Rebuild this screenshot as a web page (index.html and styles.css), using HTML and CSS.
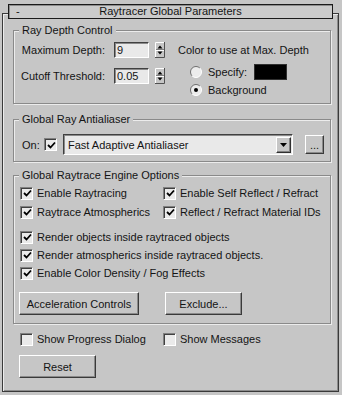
FILE: index.html
```html
<!DOCTYPE html>
<html lang="en">
<head>
  <meta charset="UTF-8">
  <title>Raytracer Global Parameters</title>
  <link rel="stylesheet" href="styles.css">
</head>
<body>

<div class="rollout">
  <div class="rollout-title">
    <span class="toggle">-</span>
    <span class="caption">Raytracer Global Parameters</span>
    <span></span>
  </div>

  <!-- Ray depth -->
  <fieldset class="group depth-group">
    <legend>Ray Depth Control</legend>
    <div class="depth-row">
      <div class="depth-fields">
        <div class="field">
          <label for="maxDepth">Maximum Depth:</label>
          <input class="edit" type="text" id="maxDepth" value="9">
          <svg class="spinner" width="10" height="16" viewBox="0 0 10 16">
            <path d="M0.5 15.5V0.5H9.5" fill="none" stroke="#fff"/>
            <path d="M9.5 0V15.5H0" fill="none" stroke="#505050"/>
            <path d="M1 7.5H9" stroke="#808080"/>
            <path d="M1 8.5H9" stroke="#fff"/>
            <path d="M5 3.5L7.5 6.5H2.5Z" fill="#000"/>
            <path d="M5 12.5L7.5 9.5H2.5Z" fill="#000"/>
          </svg>
        </div>
        <div class="field">
          <label for="cutoff">Cutoff Threshold:</label>
          <input class="edit" type="text" id="cutoff" value="0.05">
          <svg class="spinner" width="10" height="16" viewBox="0 0 10 16">
            <path d="M0.5 15.5V0.5H9.5" fill="none" stroke="#fff"/>
            <path d="M9.5 0V15.5H0" fill="none" stroke="#505050"/>
            <path d="M1 7.5H9" stroke="#808080"/>
            <path d="M1 8.5H9" stroke="#fff"/>
            <path d="M5 3.5L7.5 6.5H2.5Z" fill="#000"/>
            <path d="M5 12.5L7.5 9.5H2.5Z" fill="#000"/>
          </svg>
        </div>
      </div>
      <div class="depth-color">
        <div class="color-caption">Color to use at Max. Depth</div>
        <div class="radio-row specify">
          <svg class="radio" width="12" height="12" viewBox="0 0 12 12">
            <circle cx="6" cy="6" r="5.5" fill="#ececec"/>
            <path d="M9.9 2.1A5.5 5.5 0 0 0 2.1 9.9" fill="none" stroke="#707070"/>
            <path d="M2.1 9.9A5.5 5.5 0 0 0 9.9 2.1" fill="none" stroke="#fff"/>
          </svg>
          <span class="radio-label">Specify:</span>
          <span class="swatch"></span>
        </div>
        <div class="radio-row background">
          <svg class="radio" width="12" height="12" viewBox="0 0 12 12">
            <circle cx="6" cy="6" r="5.5" fill="#ececec"/>
            <path d="M9.9 2.1A5.5 5.5 0 0 0 2.1 9.9" fill="none" stroke="#707070"/>
            <path d="M2.1 9.9A5.5 5.5 0 0 0 9.9 2.1" fill="none" stroke="#fff"/>
            <circle cx="6" cy="6" r="2" fill="#000"/>
          </svg>
          <span class="radio-label">Background</span>
        </div>
      </div>
    </div>
  </fieldset>

  <!-- Antialiaser -->
  <fieldset class="group aa-group">
    <legend>Global Ray Antialiaser</legend>
    <div class="aa-row">
      <span class="aa-on">On:</span>
      <span class="check on">
        <svg width="9" height="9" viewBox="0 0 9 9"><path d="M1 4L3.5 6.5L8 1.5" fill="none" stroke="#000" stroke-width="1.8"/></svg>
      </span>
      <div class="dropdown">
        <span class="dropdown-text">Fast Adaptive Antialiaser</span>
        <span class="dropdown-arrow">
          <svg width="7" height="4" viewBox="0 0 7 4"><path d="M0 0H7L3.5 4Z" fill="#000"/></svg>
        </span>
      </div>
      <button type="button" class="btn dots">...</button>
    </div>
  </fieldset>

  <!-- Engine options -->
  <fieldset class="group engine-group">
    <legend>Global Raytrace Engine Options</legend>
    <div class="opt-grid">
      <div class="opt"><span class="check"><svg width="9" height="9" viewBox="0 0 9 9"><path d="M1 4L3.5 6.5L8 1.5" fill="none" stroke="#000" stroke-width="1.8"/></svg></span>Enable Raytracing</div>
      <div class="opt"><span class="check"><svg width="9" height="9" viewBox="0 0 9 9"><path d="M1 4L3.5 6.5L8 1.5" fill="none" stroke="#000" stroke-width="1.8"/></svg></span>Enable Self Reflect / Refract</div>
      <div class="opt"><span class="check"><svg width="9" height="9" viewBox="0 0 9 9"><path d="M1 4L3.5 6.5L8 1.5" fill="none" stroke="#000" stroke-width="1.8"/></svg></span>Raytrace Atmospherics</div>
      <div class="opt"><span class="check"><svg width="9" height="9" viewBox="0 0 9 9"><path d="M1 4L3.5 6.5L8 1.5" fill="none" stroke="#000" stroke-width="1.8"/></svg></span>Reflect / Refract Material IDs</div>
    </div>
    <div class="opt-list">
      <div class="opt"><span class="check"><svg width="9" height="9" viewBox="0 0 9 9"><path d="M1 4L3.5 6.5L8 1.5" fill="none" stroke="#000" stroke-width="1.8"/></svg></span>Render objects inside raytraced objects</div>
      <div class="opt"><span class="check"><svg width="9" height="9" viewBox="0 0 9 9"><path d="M1 4L3.5 6.5L8 1.5" fill="none" stroke="#000" stroke-width="1.8"/></svg></span>Render atmospherics inside raytraced objects.</div>
      <div class="opt"><span class="check"><svg width="9" height="9" viewBox="0 0 9 9"><path d="M1 4L3.5 6.5L8 1.5" fill="none" stroke="#000" stroke-width="1.8"/></svg></span>Enable Color Density / Fog Effects</div>
    </div>
    <div class="btn-row">
      <button type="button" class="btn accel">Acceleration Controls</button>
      <button type="button" class="btn exclude">Exclude...</button>
    </div>
  </fieldset>

  <div class="opt-grid show-row">
    <div class="opt"><span class="check"></span>Show Progress Dialog</div>
    <div class="opt"><span class="check"></span>Show Messages</div>
  </div>

  <button type="button" class="btn reset">Reset</button>
</div>

</body>
</html>
```

FILE: styles.css
```css
body {
  margin: 0;
  background-color: #c6c6c6;
  font-family: "Liberation Sans", Arial, sans-serif;
  font-size: 11px;
  color: #141414;
}

.rollout {
  margin: 13px 3px 0 2px;
  border: 1px solid #3a3a3a;
  box-shadow: inset 1px 1px 0 #ececec, inset -1px -1px 0 #8c8c8c;
  padding: 0 0 13px 0;
}

.rollout-title {
  display: grid;
  grid-template-columns: 20px 1fr 20px;
  margin: -10px 5px 0 5px;
  height: 13px;
  line-height: 13px;
  border: 1px solid #1a1a1a;
  background-color: #cbcbcb;
  box-shadow: inset 1px 1px 0 #8c8c8c;
}

.rollout-title .toggle {
  padding-left: 7px;
}

.rollout-title .caption {
  text-align: center;
}

/* group boxes */
.group {
  margin: 5px 7px 0 10px;
  padding: 0 5px 6px 5px;
  border: 1px solid #8a8a8a;
  box-shadow: 1px 1px 0 #ececec, inset 1px 1px 0 #ececec;
  min-width: 0;
}

.group legend {
  padding: 0 3px;
  line-height: 13px;
  background-color: #c6c6c6;
}

.aa-group {
  margin-top: 9px;
}

.engine-group {
  margin-top: 7px;
  padding-bottom: 8px;
}

/* ray depth */
.depth-row {
  display: flex;
  margin-top: 5px;
}

.depth-fields {
  display: flex;
  flex-direction: column;
  gap: 10px;
}

.field {
  display: flex;
  align-items: center;
  height: 16px;
}

.field label {
  width: 86px;
  margin-right: 9px;
  text-align: right;
}

.edit {
  width: 35px;
  height: 16px;
  box-sizing: border-box;
  margin: 0;
  padding: 0 2px;
  font: inherit;
  color: inherit;
  background-color: #e9e9e9;
  border: 1px solid #fff;
  border-top-color: #404040;
  border-left-color: #404040;
  box-shadow: inset 1px 1px 0 #8a8a8a;
  outline: none;
}

.spinner {
  margin-left: 6px;
  display: block;
}

.depth-color {
  margin-left: 13px;
}

.color-caption {
  line-height: 16px;
}

.radio-row {
  display: flex;
  align-items: center;
  margin-left: 12px;
}

.radio-row.specify {
  margin-top: 6px;
  height: 16px;
}

.radio-row.background {
  margin-top: 3px;
  height: 14px;
}

.radio {
  display: block;
}

.radio-label {
  margin-left: 6px;
}

.specify .radio-label {
  width: 46px;
}

.swatch {
  width: 33px;
  height: 16px;
  box-sizing: border-box;
  background-color: #000;
  border: 1px solid #303030;
}

/* checkboxes */
.check {
  display: flex;
  align-items: center;
  justify-content: center;
  width: 13px;
  height: 13px;
  box-sizing: border-box;
  background-color: #eaeaea;
  border: 1px solid #fff;
  border-top-color: #808080;
  border-left-color: #808080;
  box-shadow: inset 1px 1px 0 #404040;
  flex-shrink: 0;
}

.check svg {
  margin: 1px 0 0 1px;
}

/* antialiaser */
.aa-row {
  display: flex;
  align-items: center;
  margin-top: 8px;
  height: 21px;
}

.aa-on {
  margin-left: 3px;
  width: 16px;
}

.aa-row .check {
  margin-left: 6px;
}

.dropdown {
  display: flex;
  align-items: center;
  justify-content: space-between;
  margin-left: 6px;
  width: 230px;
  height: 21px;
  box-sizing: border-box;
  padding: 1px 1px 1px 4px;
  background-color: #e9e9e9;
  border: 1px solid #fff;
  border-top-color: #404040;
  border-left-color: #404040;
  box-shadow: inset 1px 1px 0 #8a8a8a;
}

.dropdown-arrow {
  display: flex;
  align-items: center;
  justify-content: center;
  width: 15px;
  height: 16px;
  box-sizing: border-box;
  background-color: #c6c6c6;
  border: 1px solid #303030;
  border-top-color: #fff;
  border-left-color: #fff;
  box-shadow: inset -1px -1px 0 #808080;
}

/* buttons */
.btn {
  margin: 0;
  padding: 0;
  font: inherit;
  color: inherit;
  background-color: #c6c6c6;
  border: 1px solid #3a3a3a;
  border-top-color: #fff;
  border-left-color: #fff;
  box-shadow: inset -1px -1px 0 #8a8a8a;
  cursor: pointer;
}

.dots {
  margin-left: 12px;
  width: 19px;
  height: 19px;
  line-height: 12px;
}

/* engine options */
.opt-grid {
  display: grid;
  grid-template-columns: 143px 1fr;
  row-gap: 1px;
  margin-top: 2px;
}

.opt {
  display: flex;
  align-items: center;
  height: 18px;
  white-space: nowrap;
}

.opt .check {
  margin: 0 4px 0 1px;
}

.opt-list {
  margin-top: 7px;
}

.btn-row {
  display: flex;
  gap: 26px;
  margin-top: 10px;
}

.accel {
  width: 120px;
  height: 23px;
}

.exclude {
  width: 77px;
  height: 23px;
}

.show-row {
  margin: 6px 0 0 16px;
}

.reset {
  display: block;
  margin: 7px 0 0 16px;
  width: 77px;
  height: 23px;
}
```
